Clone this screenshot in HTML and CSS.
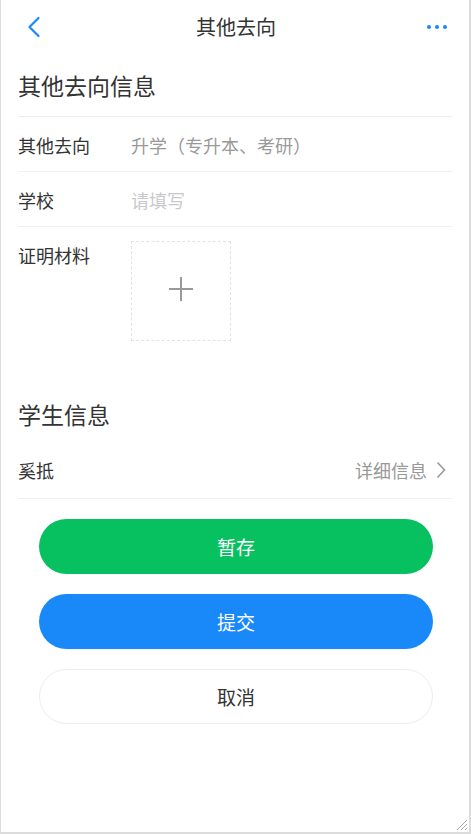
FILE: index.html
```html
<!DOCTYPE html>
<html lang="zh-CN">
<head>
<meta charset="utf-8">
<title>其他去向</title>
<link rel="stylesheet" href="styles.css">
</head>
<body>
<div class="frame">
  <header class="nav">
    <span class="nav-btn nav-left">
      <svg width="14" height="22" viewBox="0 0 14 22"><path d="M11.5 2 L2.5 11 L11.5 20" fill="none" stroke="#1989fa" stroke-width="2.2" stroke-linecap="round" stroke-linejoin="round"/></svg>
    </span>
    <h1 class="nav-title">其他去向</h1>
    <span class="nav-btn nav-right">
      <span class="dot"></span><span class="dot"></span><span class="dot"></span>
    </span>
  </header>

  <section class="section">
    <h2 class="section-title">其他去向信息</h2>
    <div class="row">
      <span class="label">其他去向</span>
      <span class="value">升学（专升本、考研）</span>
    </div>
    <div class="row">
      <span class="label">学校</span>
      <span class="value placeholder">请填写</span>
    </div>
    <div class="row row-upload">
      <span class="label">证明材料</span>
      <div class="uploader">
        <svg class="plus" width="24" height="24" viewBox="0 0 24 24"><path d="M12 0 V24 M0 12 H24" stroke="#999" stroke-width="2"/></svg>
      </div>
    </div>
  </section>

  <section class="section section-2">
    <h2 class="section-title">学生信息</h2>
    <div class="row row-last">
      <span class="label">奚抵</span>
      <span class="link">详细信息
        <svg width="10" height="18" viewBox="0 0 10 18"><path d="M1.5 1.5 L8.5 9 L1.5 16.5" fill="none" stroke="#9a9a9a" stroke-width="1.6"/></svg>
      </span>
    </div>
  </section>

  <div class="actions">
    <button class="btn btn-green">暂存</button>
    <button class="btn btn-blue">提交</button>
    <button class="btn btn-plain">取消</button>
  </div>

  <svg class="grip" width="14" height="14" viewBox="0 0 14 14"><path d="M13 3 L3 13 M13 7 L7 13 M13 11 L11 13" stroke="#a8a8a8" stroke-width="1"/></svg>
</div>
</body>
</html>
```

FILE: styles.css
```css
* { box-sizing: border-box; }
html, body { margin: 0; padding: 0; background: #fff; }
body {
  font-family: "Noto Sans CJK SC", "Noto Sans", sans-serif;
  color: #333;
}
.frame {
  position: relative;
  width: 471px;
  height: 834px;
  border-left: 1px solid #dcdcdc;
  border-right: 2px solid #dcdcdc;
  border-bottom: 2px solid #dcdcdc;
  background: #fff;
  overflow: hidden;
}
.nav {
  height: 54px;
  display: grid;
  grid-template-columns: 1fr auto 1fr;
  align-items: center;
  padding: 0 22px 0 26px;
}
.nav-btn { display: flex; align-items: center; }
.nav-right { justify-content: flex-end; gap: 4px; }
.dot { width: 4px; height: 4px; border-radius: 50%; background: #1989fa; }
.nav-title {
  margin: 0 0 0 -2px;
  font-size: 20px;
  font-weight: 400;
  color: #333;
  line-height: 1;
}
.section { padding: 0 17px; }
.section-title {
  margin: 0;
  height: 63px;
  display: flex;
  align-items: center;
  font-size: 23px;
  font-weight: 400;
  color: #333;
  border-bottom: 1px solid #ebedf0;
}
.section-2 { margin-top: 27px; }
.section-2 .section-title { border-bottom: none; height: 63px; }
.row {
  display: flex;
  align-items: center;
  height: 55px;
  padding-top: 1px;
  border-bottom: 1px solid #f0f0f0;
  font-size: 18px;
}
.label { width: 113px; flex: none; color: #333; }
.value { color: #999; }
.placeholder { color: #c8c9cc; }
.row-upload {
  height: auto;
  align-items: flex-start;
  border-bottom: none;
  padding: 14px 0;
}
.row-upload .label { line-height: 28px; }
.uploader {
  width: 100px;
  height: 100px;
  border: 1px dashed #e3e3e3;
  display: flex;
  align-items: center;
  justify-content: center;
}
.plus { margin-bottom: 4px; }
.row-last { height: 54px; padding-top: 0; padding-bottom: 3px; justify-content: space-between; }
.link {
  display: flex;
  align-items: center;
  gap: 9px;
  color: #999;
  padding-right: 6px;
}
.actions {
  display: flex;
  flex-direction: column;
  gap: 20px;
  padding: 20px 36px 0 38px;
}
.btn {
  height: 55px;
  border-radius: 28px;
  border: none;
  font-family: inherit;
  font-size: 19px;
  color: #fff;
}
.btn-green { background: #07c160; }
.btn-blue { background: #1989fa; }
.btn-plain { background: #fff; color: #333; border: 1px solid #ebedf0; }
.grip { position: absolute; right: 1px; bottom: 1px; }
```
